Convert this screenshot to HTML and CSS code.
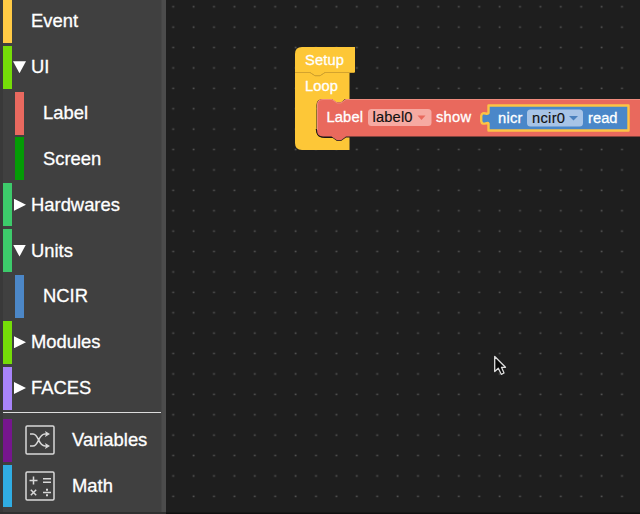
FILE: index.html
```
<!DOCTYPE html>
<html lang="en">
<head>
<meta charset="utf-8">
<title>Block editor</title>
<link rel="stylesheet" href="styles.css">
</head>
<body>
<div class="app">
  <nav class="toolbox">
    <div class="row event"><i class="bar"></i><span class="arrow"></span><span>Event</span></div>
    <div class="row lime"><i class="bar"></i><span class="arrow open"></span><span>UI</span></div>
    <div class="row child label"><i class="bar"></i><span>Label</span></div>
    <div class="row child screen"><i class="bar"></i><span>Screen</span></div>
    <div class="row green"><i class="bar"></i><span class="arrow closed"></span><span>Hardwares</span></div>
    <div class="row green"><i class="bar"></i><span class="arrow open"></span><span>Units</span></div>
    <div class="row child ncir"><i class="bar"></i><span>NCIR</span></div>
    <div class="row lime"><i class="bar"></i><span class="arrow closed"></span><span>Modules</span></div>
    <div class="row faces"><i class="bar"></i><span class="arrow closed"></span><span>FACES</span></div>
    <div class="separator"></div>
    <div class="row iconrow variables"><i class="bar"></i>
      <svg class="icon" width="30" height="30" viewBox="0 0 30 30"><rect x="1" y="1" width="28" height="28" rx="1.2"/><path d="M5 9h3c6 0 5 12 12 12h3M5 21h3c6 0 5-12 12-12h3"/><path class="solid" d="M20 6l5 3-5 3 1-3zM20 18l5 3-5 3 1-3z"/></svg>
      <span>Variables</span></div>
    <div class="row iconrow math"><i class="bar"></i>
      <svg class="icon" width="30" height="30" viewBox="0 0 30 30"><rect x="1" y="1" width="28" height="28" rx="1.2"/><path d="M4.5 9.5h8M8.500 5.500v8M18 7.800h8M18 11.300h8M5.800 18.800l5.400 5.400M11.200 18.800l-5.400 5.400M18 21.500h8"/><path class="solid" d="M21 17.800h2v2h-2zM21 23.300h2v2h-2z"/></svg>
      <span>Math</span></div>
  </nav>
  <main class="workspace">
    <svg class="canvas" width="474" height="514" viewBox="166 0 474 514">
      <defs>
        <pattern id="grid" x="162.900" y="-3.400" width="20.400" height="20.400" patternUnits="userSpaceOnUse"><rect class="dot" x="9.400" y="9.400" width="1.800" height="1.500"/></pattern>
      </defs>
      <rect class="ground" x="166" y="0" width="474" height="514"/>
      <rect x="168" y="0" width="472" height="510" fill="url(#grid)"/>
      <rect class="edge" x="166" y="512.500" width="474" height="1.500"/>
      <path class="yellow" d="M295 54Q295 47 302 47H355V72.500H325L320 75.800H315L310 72.500H295Z"/>
      <path class="yellow" d="M295 72.500H310L315 75.800H320L325 72.500H349.500V99H345L341 102.500H336L332 99H323Q316.500 99 316.500 105V131Q316.500 137.500 323 137.500H332L337 141H341L346 137.500H349.500V150H302Q295 150 295 143Z"/>
      <path class="seam" d="M295 72.500H310L315 75.800H320L325 72.500H354"/>
      <path class="shade" d="M316.700 129Q317 137 325 137H333"/>
      <path class="red" d="M323 99H332L337 102.500H341L346 99H640V136.500H346L341 140.300H337L331.500 136.500H323Q317 136.500 317 130V105Q317 99 323 99Z"/>
      <path class="light" d="M317.500 130V105Q317.500 99.500 323 99.500H332L337 103H341L346 99.500H640"/>
      <path class="blue" d="M488.500 105.500H628.500V130.500H488.500V123.500C487.500 121.500 482 126.500 481.200 121V116C482 110.500 487.500 115.500 488.500 113Z"/>
      <rect class="pink" x="368" y="109" width="63.500" height="17" rx="3.500"/>
      <path class="redmark" d="M417.500 115.500h8l-4 4.500z"/>
      <rect class="pale" x="527" y="109.500" width="56" height="17" rx="3.500"/>
      <path class="bluemark" d="M569 116h9l-4.500 4.500z"/>
      <g class="words">
        <text x="305" y="65.200" textLength="39">Setup</text>
        <text x="305" y="90.700" textLength="33">Loop</text>
        <text x="326.500" y="122.200" textLength="36.500">Label</text>
        <text class="ink" x="372.500" y="122.200" textLength="40">label0</text>
        <text x="436" y="122.200" textLength="35">show</text>
        <text x="498" y="123" textLength="24.500">nicr</text>
        <text class="ink" x="532" y="123" textLength="33">ncir0</text>
        <text x="588" y="123" textLength="29.500">read</text>
      </g>
      <path class="cursor" d="M494.700 356.500V371.500L498.300 368.300L501.300 374.300L504 373L501.500 367.300H505.500Z"/>
    </svg>
  </main>
</div>
</body>
</html>
```

FILE: styles.css
```
* { box-sizing: border-box; }
body { margin: 0; background: #1e1e1e; }
.app {
  display: flex;
  width: 640px;
  height: 514px;
  overflow: hidden;
  font-family: "Liberation Sans", Arial, sans-serif;
}
.toolbox {
  width: 166px;
  flex: none;
  padding-left: 3px;
  background: linear-gradient(90deg, #393939 3px, #404040 3px, #404040 161px, #4c4c4c 162px);
  border-bottom: 2px solid #303030;
  color: #fff;
  font-size: 18.4px;
  -webkit-text-stroke: 0.3px #fff;
}
.row {
  display: flex;
  align-items: center;
  height: 42.9px;
  margin-bottom: 2.95px;
}
.bar { width: 9px; height: 100%; flex: none; background: var(--color); }
.event { --color: #ffca45; }
.lime { --color: #75dc08; }
.green { --color: #3dca6b; }
.label { --color: #e9695f; }
.screen { --color: #049b05; }
.ncir { --color: #4c87c7; }
.faces { --color: #a884fa; }
.variables { --color: #76168e; }
.math { --color: #30ade3; }
.child { padding-left: 12px; }
.child span { margin-left: 19px; }
.arrow { width: 19px; height: 12px; flex: none; }
.arrow::before { content: ""; display: block; background: #fff; }
.open::before { width: 13px; height: 12px; margin-left: 1px; clip-path: polygon(0 0, 100% 0, 50% 100%); }
.closed::before { width: 12px; height: 12px; margin-left: 2px; clip-path: polygon(0 0, 100% 50%, 0 100%); }
.separator { height: 1px; width: 158px; margin: 2px 0 5.300px; background: #ddd; }
.icon { margin: 0 17px 0 13px; flex: none; fill: none; stroke: #d8d8d8; stroke-width: 1.5; }
.icon .solid { fill: #d8d8d8; stroke: none; }
.workspace { flex: 1; }
.canvas { display: block; }
.ground { fill: #1e1e1e; }
.dot { fill: #555; }
.edge { fill: #101010; }
.yellow { fill: #fdc737; }
.seam { fill: none; stroke: #d3a32e; stroke-width: 1; }
.shade { fill: none; stroke: #1b1714; stroke-width: 2; }
.red { fill: #e9695d; }
.light { fill: none; stroke: #f08b7d; stroke-width: 1; }
.blue { fill: #4a87c9; stroke: #fdc344; stroke-width: 2.4; stroke-linejoin: round; }
.pink { fill: #f6aaa2; }
.pale { fill: #a7c4e7; }
.redmark { fill: #e9695d; }
.bluemark { fill: #4a80bd; }
.words { fill: #fff; stroke: #fff; stroke-width: 0.3; font-size: 14.7px; }
.words .ink { fill: #111; stroke: #111; stroke-width: 0.15; }
.cursor { fill: #080808; stroke: #ddd; stroke-width: 1.3; stroke-linejoin: round; }
```
